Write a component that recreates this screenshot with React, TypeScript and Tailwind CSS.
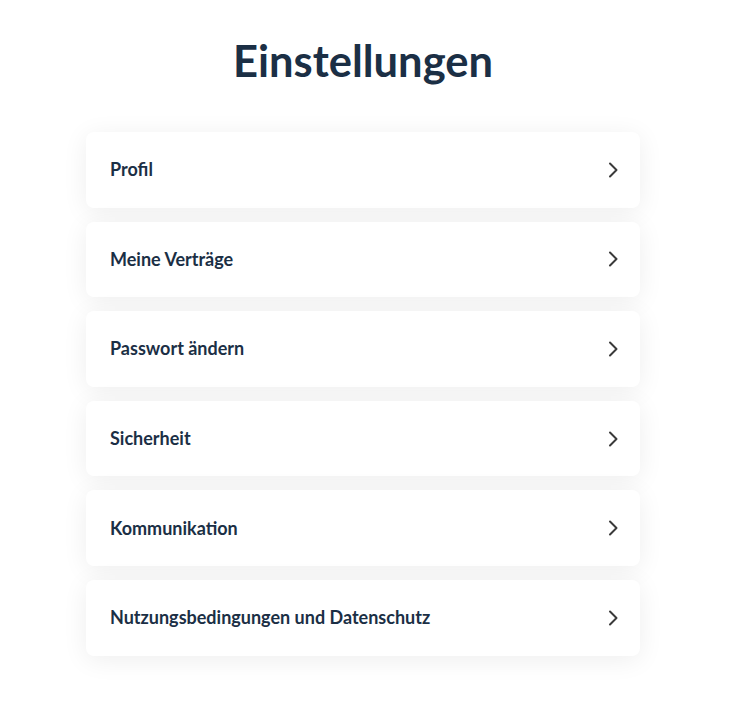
import React from "react";

const items = [
  "Profil",
  "Meine Verträge",
  "Passwort ändern",
  "Sicherheit",
  "Kommunikation",
  "Nutzungsbedingungen und Datenschutz",
];

export default function App() {
  return (
    <div
      className="min-h-[714px] w-full bg-white"
      style={{ fontFamily: "Lato, 'Noto Sans', sans-serif" }}
    >
      <div className="flex flex-col items-center pt-[34px] pr-[10px]">
        <h1 className="text-[43.5px] leading-[52px] font-bold text-[#1b2f45]">Einstellungen</h1>
        <div className="mt-[46px] flex w-[554px] flex-col gap-[14px]">
          {items.map((label) => (
            <button
              key={label}
              className="flex h-[75.6px] w-full items-center justify-between rounded-lg bg-white pl-[24px] pr-[22px] shadow-[0_4px_26px_rgba(0,0,0,0.07)]"
            >
              <span className="text-[18px] font-bold text-[#1b2f45]">{label}</span>
              <svg width="10" height="16" viewBox="0 0 10 16" fill="none">
                <path d="M2 1.5 L8.5 8 L2 14.5" stroke="#3a3a3a" strokeWidth="2" strokeLinecap="round" strokeLinejoin="round" />
              </svg>
            </button>
          ))}
        </div>
      </div>
    </div>
  );
}
